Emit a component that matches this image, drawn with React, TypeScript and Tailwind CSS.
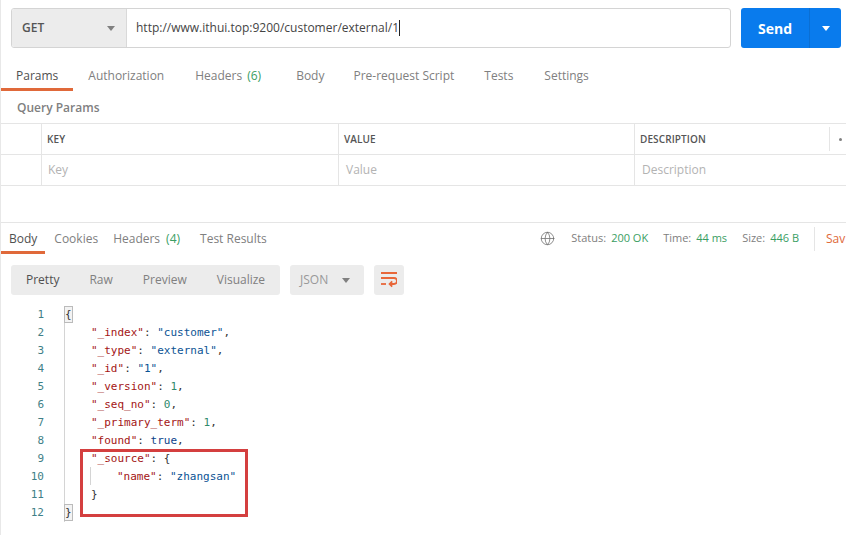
import { Globe } from 'lucide-react'

const requestTabs = [
  { label: 'Params', active: true },
  { label: 'Authorization' },
  { label: 'Headers', count: '(6)', shift: 'ml-px' },
  { label: 'Body', shift: 'ml-[5px]' },
  { label: 'Pre-request Script', shift: '-ml-px' },
  { label: 'Tests' },
  { label: 'Settings', shift: 'ml-px' },
]

function Caret({ className }: { className: string }) {
  return (
    <svg viewBox="0 0 8 5" className={className} fill="currentColor">
      <path d="M0 0h8L4 5z" />
    </svg>
  )
}

function WrapIcon() {
  return (
    <svg viewBox="0 0 16 16" className="w-4 h-4 text-[#e8673a]" fill="none" stroke="currentColor" strokeWidth="1.8">
      <path d="M0 1h16M0 6h13a3 3 0 0 1 0 6H9" />
      <path d="M0 12h5" />
      <path d="M11.2 9.4 8.6 12l2.6 2.6" />
    </svg>
  )
}

const S = ({ c }: { c: string }) => <span className="text-[#a31515]">{c}</span>
const V = ({ c }: { c: string }) => <span className="text-[#0b5394]">{c}</span>
const N = ({ c }: { c: string }) => <span className="text-[#2f8a6b]">{c}</span>
const P = ({ c }: { c: string }) => <span className="text-[#333333]">{c}</span>

const bracket = 'inline-block h-[17px] leading-[15px] border border-[#bbbbbb] bg-[#f3f3f3] -ml-[2px]'

const lines = [
  <span className={bracket}><P c="{" /></span>,
  <><span className="ml-[25px]" /><S c={'"_index"'} /><P c=": " /><V c={'"customer"'} /><P c="," /></>,
  <><span className="ml-[25px]" /><S c={'"_type"'} /><P c=": " /><V c={'"external"'} /><P c="," /></>,
  <><span className="ml-[25px]" /><S c={'"_id"'} /><P c=": " /><V c={'"1"'} /><P c="," /></>,
  <><span className="ml-[25px]" /><S c={'"_version"'} /><P c=": " /><N c="1" /><P c="," /></>,
  <><span className="ml-[25px]" /><S c={'"_seq_no"'} /><P c=": " /><N c="0" /><P c="," /></>,
  <><span className="ml-[25px]" /><S c={'"_primary_term"'} /><P c=": " /><N c="1" /><P c="," /></>,
  <><span className="ml-[25px]" /><S c={'"found"'} /><P c=": " /><span className="text-[#0b3f8a]">true</span><P c="," /></>,
  <><span className="ml-[25px]" /><S c={'"_source"'} /><P c=": {" /></>,
  <><span className="ml-[51px]" /><S c={'"name"'} /><P c=": " /><V c={'"zhangsan"'} /></>,
  <><span className="ml-[25px]" /><P c="}" /></>,
  <span className={bracket}><P c="}" /></span>,
]

export default function App() {
  return (
    <div className="relative w-[846px] h-[535px] overflow-hidden bg-white border-l border-[#e8e8e8] font-['Open_Sans',sans-serif] text-[12px] text-[#808080]">
      {/* url bar */}
      <div className="flex pl-[10px] pr-[5px] pt-[8px]">
        <div className="flex h-[40px] w-[720px] rounded-[3px] border border-[#d4d4d4] overflow-hidden">
          <div className="flex items-center justify-between w-[115px] pl-[10px] pr-[11px] bg-[#ececec] border-r border-[#d9d9d9] text-[#555555] font-semibold">
            GET
            <Caret className="w-[8px] h-[5px] text-[#808080]" />
          </div>
          <div className="flex items-center pl-[9px] text-[#444444]">
            http://www.ithui.top:9200/customer/external/1
            <span className="w-px h-[16px] bg-[#222222]" />
          </div>
        </div>
        <div className="flex h-[40px] w-[100px] ml-[10px] rounded-[3px] bg-[#097bed] text-white">
          <div className="flex items-center justify-center w-[69px] text-[14px] font-bold border-r border-[#0a6fd4]">Send</div>
          <div className="flex items-center justify-center flex-1">
            <Caret className="w-[8px] h-[5px] text-white" />
          </div>
        </div>
      </div>

      {/* request tabs */}
      <div className="flex mt-[17px] h-[26px]">
        {requestTabs.map((t) => (
          <div
            key={t.label}
            className={`h-[26px] px-[15px] pt-[1px] leading-[19px] whitespace-nowrap ${t.active ? 'border-b-[3px] border-[#e0693a] text-[#505050]' : ''} ${t.shift ?? ''}`}
          >
            {t.label}
            {t.count && <span className="ml-[5px] text-[#3a9e63]">{t.count}</span>}
          </div>
        ))}
      </div>

      <div className="pl-[16px] pt-[8px] h-[32px] font-semibold text-[#808080] leading-[18px]">Query Params</div>

      {/* params table */}
      <div className="border-t border-[#e5e5e5] text-[11px]">
        <div className="flex h-[31px] border-b border-[#e5e5e5] text-[10px] tracking-[0.1px] font-semibold text-[#555555] items-center">
          <div className="w-[41px] h-full border-r border-[#e5e5e5]" />
          <div className="w-[297px] pl-[5px] h-full border-r border-[#e5e5e5] flex items-center">KEY</div>
          <div className="w-[296px] pl-[5px] h-full border-r border-[#e5e5e5] flex items-center">VALUE</div>
          <div className="w-[195px] pl-[5px] h-[24px] border-r border-[#e5e5e5] flex items-center">DESCRIPTION</div>
          <span className="ml-[9px] w-[3px] h-[3px] rounded-full bg-[#808080]" />
        </div>
        <div className="flex h-[31px] border-b border-[#e5e5e5] text-[12px] text-[#b3b3b3] items-center">
          <div className="w-[41px] h-full border-r border-[#e5e5e5]" />
          <div className="w-[297px] pl-[6px] h-full border-r border-[#e5e5e5] flex items-center">Key</div>
          <div className="w-[296px] pl-[7px] h-full border-r border-[#e5e5e5] flex items-center">Value</div>
          <div className="pl-[7px]">Description</div>
        </div>
      </div>

      {/* response header */}
      <div className="mt-[36px] border-t border-[#e5e5e5] flex items-start h-[33px]">
        <div className="h-[31px] px-[8px] pt-[6px] leading-[19px] border-b-[3px] border-[#e0693a] text-[#505050]">Body</div>
        <div className="pt-[6px] leading-[19px] ml-[9px]">Cookies</div>
        <div className="pt-[6px] leading-[19px] ml-[15px]">Headers<span className="ml-[6px] text-[#3a9e63]">(4)</span></div>
        <div className="pt-[6px] leading-[19px] ml-[20px]">Test Results</div>
        <div className="flex items-center ml-auto h-[31px] text-[11px] whitespace-nowrap">
          <Globe className="w-[15px] h-[15px] text-[#707070]" strokeWidth={1.25} />
          <span className="ml-[16px]">Status:</span>
          <span className="ml-[5px] text-[#3a9e63]">200 OK</span>
          <span className="ml-[15px]">Time:</span>
          <span className="ml-[5px] text-[#3a9e63]">44 ms</span>
          <span className="ml-[15px]">Size:</span>
          <span className="ml-[5px] text-[#3a9e63]">446 B</span>
          <span className="ml-[15px] h-[24px] border-l border-[#e5e5e5]" />
          <span className="ml-[11px] w-[20px] text-[12px] text-[#e0693a]">Sav</span>
        </div>
      </div>

      {/* response toolbar */}
      <div className="flex mt-[10px] pl-[10px] h-[30px]">
        <div className="flex items-center w-[269px] rounded-[3px] bg-[#ececec] pl-[15px]">
          <span className="text-[#505050]">Pretty</span>
          <span className="ml-[30px]">Raw</span>
          <span className="ml-[30px]">Preview</span>
          <span className="ml-[30px]">Visualize</span>
        </div>
        <div className="flex items-center justify-between w-[74px] ml-[10px] rounded-[3px] bg-[#ececec] pl-[10px] pr-[14px] text-[#999999]">
          JSON
          <Caret className="w-[8px] h-[5px] text-[#808080]" />
        </div>
        <div className="flex items-center justify-center w-[30px] ml-[10px] rounded-[3px] bg-[#ececec]">
          <WrapIcon />
        </div>
      </div>

      {/* code */}
      <div className="relative mt-[11px] font-['DejaVu_Sans_Mono',monospace] text-[11px] leading-[18px]">
        {lines.map((line, i) => (
          <div key={i} className="flex h-[18px]">
            <span className="w-[43px] text-right text-[#3f7f87]">{i + 1}</span>
            <span className="ml-[20px] pl-[1px] whitespace-pre border-l border-[#d4d4d4]">{line}</span>
          </div>
        ))}
        <div className="absolute left-[89px] top-[161px] h-[18px] w-px bg-[#d4d4d4]" />
        {/* red annotation box */}
        <div className="absolute left-[79px] top-[143px] w-[168px] h-[68px] border-[3px] border-[#d43f3f]" />
      </div>
    </div>
  )
}
